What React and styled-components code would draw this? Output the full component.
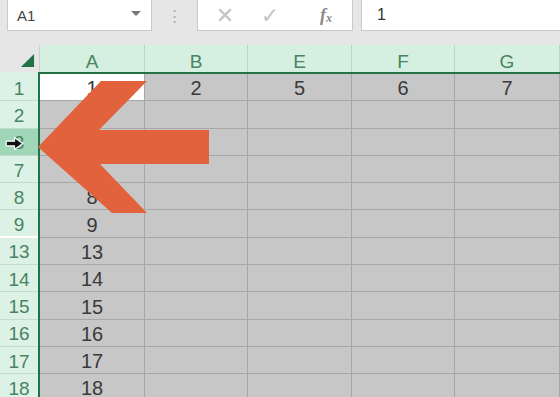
import React from "react";
import styled, { createGlobalStyle } from "styled-components";

const GlobalStyle = createGlobalStyle`
  html, body {
    margin: 0;
    padding: 0;
    background: #e6e6e6;
  }
  body {
    font-family: "Liberation Sans", Arial, sans-serif;
  }
`;

const columns = [
  { label: "A", width: 105 },
  { label: "B", width: 103 },
  { label: "E", width: 104 },
  { label: "F", width: 103 },
  { label: "G", width: 105 },
];

const rows = [
  { label: "1", values: ["1", "2", "5", "6", "7"] },
  { label: "2", values: ["2"] },
  { label: "3", values: ["3"], hover: true },
  { label: "7", values: ["7"] },
  { label: "8", values: ["8"] },
  { label: "9", values: ["9"], hiddenAfter: true },
  { label: "13", values: ["13"] },
  { label: "14", values: ["14"] },
  { label: "15", values: ["15"] },
  { label: "16", values: ["16"] },
  { label: "17", values: ["17"] },
  { label: "18", values: ["18"] },
];

const ROW_H = 27.3;

const App = () => {
  return (
    <>
      <GlobalStyle />
      <Window>
        <Toolbar>
          <NameBox>
            <span>A1</span>
            <DropCaret />
          </NameBox>
          <Grip>⋮</Grip>
          <FormulaButtons>
            <ToolGlyph>✕</ToolGlyph>
            <ToolGlyph>✓</ToolGlyph>
            <Fx>
              f<sub>x</sub>
            </Fx>
          </FormulaButtons>
          <FormulaInput>1</FormulaInput>
        </Toolbar>

        <Sheet>
          <HeaderRow>
            <Corner>
              <CornerMark viewBox="0 0 16 16">
                <path d="M15 1 L15 15 L1 15 Z" fill="#217346" />
              </CornerMark>
            </Corner>
            {columns.map((c) => (
              <ColHeader key={c.label} $w={c.width}>
                {c.label}
              </ColHeader>
            ))}
          </HeaderRow>

          <Body>
            <RowHeaders>
              {rows.map((r) => (
                <RowHeader key={r.label} $hover={r.hover} $hiddenAfter={r.hiddenAfter}>
                  {r.label}
                  {r.hover && (
                    <Cursor viewBox="0 0 16 12">
                      <path
                        d="M1 4 H8 V1 L15 6 L8 11 V8 H1 Z"
                        fill="#111"
                        stroke="#fff"
                        strokeWidth="1"
                        strokeLinejoin="round"
                      />
                    </Cursor>
                  )}
                </RowHeader>
              ))}
            </RowHeaders>

            <Cells>
              {rows.map((r, ri) => (
                <Row key={r.label}>
                  {columns.map((c, ci) => (
                    <Cell key={c.label} $w={c.width} $active={ri === 0 && ci === 0}>
                      {r.values[ci] || ""}
                    </Cell>
                  ))}
                </Row>
              ))}
            </Cells>
          </Body>

          <BigArrow viewBox="0 0 560 397">
            <polygon
              points="38,147 101,81 147,81 99,130 209,130 209,164 100,164 147,213 112,213"
              fill="#e2623e"
            />
          </BigArrow>
        </Sheet>
      </Window>
    </>
  );
};

export default App;

const Window = styled.div`
  width: 560px;
  height: 397px;
  overflow: hidden;
  background: #e6e6e6;
  display: flex;
  flex-direction: column;
`;

const Toolbar = styled.div`
  height: 31px;
  display: flex;
  align-items: stretch;
  padding-left: 7px;
  flex-shrink: 0;
`;

const NameBox = styled.div`
  width: 145px;
  background: #fff;
  border: 1px solid #c9c9c9;
  border-top: none;
  box-sizing: border-box;
  display: flex;
  align-items: center;
  justify-content: space-between;
  padding: 0 10px 0 9px;
  font-size: 15px;
  color: #444;
`;

const DropCaret = styled.span`
  width: 0;
  height: 0;
  border-left: 5px solid transparent;
  border-right: 5px solid transparent;
  border-top: 5px solid #777;
  margin-bottom: 3px;
`;

const Grip = styled.div`
  width: 45px;
  display: flex;
  align-items: center;
  justify-content: center;
  color: #aaa;
  font-size: 15px;
`;

const FormulaButtons = styled.div`
  width: 156px;
  background: #fff;
  border: 1px solid #c9c9c9;
  border-top: none;
  box-sizing: border-box;
  display: flex;
  align-items: center;
  padding-left: 16px;
  gap: 23px;
`;

const ToolGlyph = styled.span`
  font-family: "DejaVu Sans", sans-serif;
  font-size: 22px;
  color: #c4c4c4;
  width: 22px;
  text-align: center;
`;

const Fx = styled.span`
  font-family: "Liberation Serif", serif;
  font-style: italic;
  font-weight: bold;
  font-size: 18px;
  color: #8a8a8a;
  margin-left: 16px;

  sub {
    font-size: 12px;
    vertical-align: -1px;
  }
`;

const FormulaInput = styled.div`
  flex: 1;
  margin-left: 8px;
  background: #fff;
  border-left: 1px solid #c9c9c9;
  border-bottom: 1px solid #c9c9c9;
  display: flex;
  align-items: center;
  padding-left: 15px;
  font-size: 16px;
  color: #333;
`;

const Sheet = styled.div`
  position: relative;
  margin-top: 14px;
  flex: 1;
`;

const HeaderRow = styled.div`
  display: flex;
  height: 27px;
`;

const Corner = styled.div`
  width: 40px;
  flex-shrink: 0;
  background: #e6e6e6;
  display: flex;
  align-items: flex-end;
  justify-content: flex-end;
  padding: 0 4px 4px 0;
  box-sizing: border-box;
  border-right: 1px solid #cfcfcf;
`;

const CornerMark = styled.svg`
  width: 15px;
  height: 15px;
`;

const ColHeader = styled.div`
  width: ${(p) => p.$w}px;
  flex-shrink: 0;
  background: #d5f0e1;
  border-right: 1px solid #b8d6c4;
  box-sizing: border-box;
  display: flex;
  align-items: flex-end;
  justify-content: center;
  font-size: 19px;
  color: #4a8362;
  line-height: 1;
  padding-bottom: 1px;
`;

const Body = styled.div`
  display: flex;
`;

const RowHeaders = styled.div`
  width: 38px;
  flex-shrink: 0;
  display: flex;
  flex-direction: column;
  padding-top: 2px;
  background: #dcf2e6;
`;

const RowHeader = styled.div`
  position: relative;
  height: ${ROW_H}px;
  box-sizing: border-box;
  padding-top: 3px;
  border-bottom: ${(p) => (p.$hiddenAfter ? "2px solid #fff" : "1px solid #c2ddcd")};
  background: ${(p) => (p.$hover ? "#9fd6b8" : "#dcf2e6")};
  display: flex;
  align-items: center;
  justify-content: center;
  font-size: 19px;
  color: #4a8362;
`;

const Cursor = styled.svg`
  position: absolute;
  left: 5px;
  top: 7px;
  width: 19px;
  height: 15px;
`;

const Cells = styled.div`
  border-top: 2px solid #217346;
  border-left: 2px solid #217346;
  margin-top: 0;
  display: flex;
  flex-direction: column;
  background: #c7c7c7;
`;

const Row = styled.div`
  display: flex;
  height: ${ROW_H}px;
`;

const Cell = styled.div`
  width: ${(p) => p.$w}px;
  flex-shrink: 0;
  box-sizing: border-box;
  padding-top: 3px;
  border-right: 1px solid #a7a7a7;
  border-bottom: 1px solid #a7a7a7;
  background: ${(p) => (p.$active ? "#fff" : "#c7c7c7")};
  display: flex;
  align-items: center;
  justify-content: center;
  font-size: 20px;
  color: #3a3a3a;
`;

const BigArrow = styled.svg`
  position: absolute;
  left: 0;
  top: -45px;
  width: 560px;
  height: 397px;
  pointer-events: none;
`;
